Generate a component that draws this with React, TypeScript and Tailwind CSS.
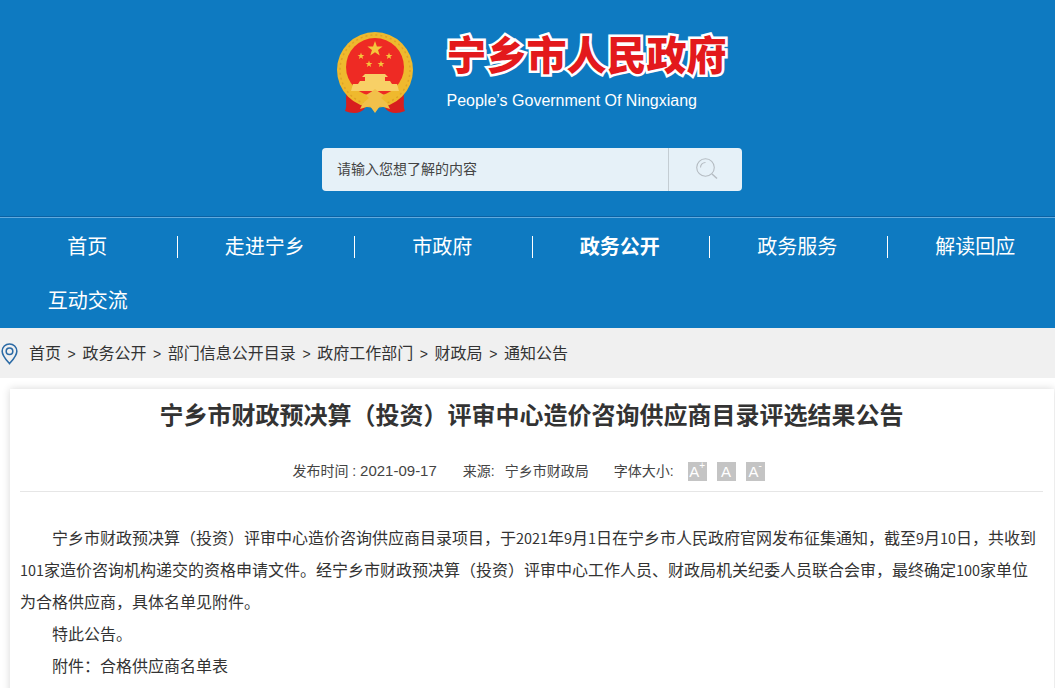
const font = "font-['Liberation_Sans','Noto_Sans_CJK_SC',sans-serif]";

function Emblem() {
  const star = "M0,-10 L2.4,-3.1 9.5,-3.1 3.8,1.2 5.9,8.1 0,4 -5.9,8.1 -3.8,1.2 -9.5,-3.1 -2.4,-3.1 Z";
  return (
    <svg width="80" height="86" viewBox="0 0 80 86" className="mt-[2px] shrink-0">
      {/* curtains */}
      <path d="M12 58 C8 66 12 74 9 80 C16 83 25 83 29 77 L33 68 Z" fill="#d81f1e" />
      <path d="M66 58 C70 66 66 74 69 80 C62 83 53 83 49 77 L45 68 Z" fill="#d81f1e" />
      {/* ring */}
      <circle cx="39" cy="39" r="38" fill="#efb92e" />
      <circle cx="39" cy="39" r="35" fill="none" stroke="#e0a326" strokeWidth="1.5" strokeDasharray="2 3" />
      <circle cx="39" cy="36" r="29" fill="#ee2a24" />
      <g fill="#f5c63c">
        <path transform="translate(39 18) scale(0.8)" d={star} />
        <path transform="translate(25 25) scale(0.36)" d={star} />
        <path transform="translate(53 25) scale(0.36)" d={star} />
        <path transform="translate(33 33) scale(0.36)" d={star} />
        <path transform="translate(45 33) scale(0.36)" d={star} />
      </g>
      {/* gate */}
      <g fill="#f8d066">
        <path d="M29 43 H49 L52 46 H26 Z" />
        <path d="M29 46 H49 V50 H29 Z" />
        <path d="M24 50 H54 L56 53 H22 Z" />
        <path d="M17 53 H61 L63 60 H15 Z" />
      </g>
      {/* ornament under the ring */}
      <path d="M30 64 L35 61 L39 58 L43 61 L48 64 L45 67 L51 72 L54 78 L44 75 L39 82 L34 75 L24 78 L27 72 L33 67 Z" fill="#f2c04a" />
    </svg>
  );
}

function PinIcon() {
  return (
    <svg width="17" height="22" viewBox="0 0 18 24" fill="none" stroke="#2b6aa5" strokeWidth="1.7">
      <path d="M9 22.5 C5 18 1 14 1 9 A8 8 0 0 1 17 9 C17 14 13 18 9 22.5 Z" />
      <circle cx="9" cy="9" r="3.6" />
    </svg>
  );
}

function SearchIcon() {
  return (
    <svg width="22" height="22" viewBox="0 0 22 22" fill="none" stroke="#b5bcc2" strokeWidth="1.1">
      <circle cx="9.5" cy="9.5" r="8.8" />
      <path d="M4.5 9.5 A5 5 0 0 1 9.5 4.5" />
      <path d="M16 16 L21 20.5" strokeWidth="1.5" />
    </svg>
  );
}

function Num({ children }: { children: React.ReactNode }) {
  return <span className="text-[14.4px] leading-none">{children}</span>;
}

const navItems = ["首页", "走进宁乡", "市政府", "政务公开", "政务服务", "解读回应", "互动交流"];
const crumbs = ["首页", "政务公开", "部门信息公开目录", "政府工作部门", "财政局", "通知公告"];
const sizeBtn = "flex h-[19px] w-[19px] items-start justify-center bg-[#c4c4c4] text-[15px] leading-[20px] text-white";

export default function App() {
  return (
    <div className="h-[688px] w-[1055px] overflow-hidden">
      <div className={`${font} w-[1064px] bg-white`}>
        <header className="h-[217px] border-b border-[#0a62a4] bg-[#0e7ac1]">
          <div className="flex justify-center pl-[8px] pt-[29px]">
            <Emblem />
            <div className="ml-[30.5px] w-[289.5px]">
              <h1 className="text-[40px] font-black leading-[48px] whitespace-nowrap text-[#e3191c] [-webkit-text-stroke:5px_#ffffff] [paint-order:stroke_fill] font-['Noto_Sans_CJK_SC',sans-serif]">
                宁乡市人民政府
              </h1>
              <p className="mt-[13px] text-[16px] leading-[22px] whitespace-nowrap text-white">People’s Government Of Ningxiang</p>
            </div>
          </div>
          <div className="mx-auto mt-[31px] flex h-[43px] w-[420px] overflow-hidden rounded-[4px] bg-[#e6f1f8]">
            <div className="flex flex-1 items-center border-r border-[#c4cdd3] pl-[15px] text-[14px] text-[#444444]">请输入您想了解的内容</div>
            <div className="flex w-[73px] items-center justify-center pb-[1px] pl-[2px]"><SearchIcon /></div>
          </div>
        </header>
        <nav className="grid h-[111px] grid-cols-[repeat(6,177.5px)] border-t border-[#62aade] bg-[#0e7ac1] text-[20px] text-white">
          {navItems.map((item, i) => (
            <div key={item} className={`flex h-[55px] items-center justify-center ${i < 6 ? "pt-[2px]" : ""}`}>
              <span className={`flex h-[22px] w-full items-center justify-center pr-[2px] ${i < 5 ? "border-r border-white" : ""} ${item === "政务公开" ? "font-bold" : ""}`}>
                {item}
              </span>
            </div>
          ))}
        </nav>
        <div className="flex h-[50px] items-center bg-[#f0f0f0] pt-[2px] text-[16px] text-[#333333]">
          <span className="ml-[1px] mr-[11px] flex"><PinIcon /></span>
          {crumbs.map((c, i) => (
            <span key={c} className="flex items-center">
              {i > 0 && <span className="mx-[6.6px] text-[14px]">&gt;</span>}
              {c}
            </span>
          ))}
        </div>
        <main className="mx-[10px] mt-[11px] h-[320px] bg-white pl-[10px] pr-[11px] shadow-[0_0_8px_rgba(0,0,0,0.16)]">
          <h2 className="pt-[9px] text-center text-[24px] font-bold leading-[36px] text-[#333333]">
            宁乡市财政预决算（投资）评审中心造价咨询供应商目录评选结果公告
          </h2>
          <div className="mt-[26px] flex h-[22px] items-center justify-center pr-[6px] text-[14px] text-[#444444]">
            <span>发布时间 : <span className="text-[15px]">2021-09-17</span></span>
            <span className="ml-[26px]">来源:<span className="ml-[10px]">宁乡市财政局</span></span>
            <span className="ml-[25px]">字体大小:</span>
            <span className={`ml-[14px] ${sizeBtn}`}>A<sup className="mt-[9px] text-[10px]">+</sup></span>
            <span className={`ml-[10px] ${sizeBtn}`}>A</span>
            <span className={`ml-[10px] ${sizeBtn}`}>A<sup className="mt-[9px] text-[10px]">-</sup></span>
          </div>
          <div className="mt-[9px] border-t border-[#e6e6e6] pt-[29px] font-['Noto_Sans_CJK_SC',sans-serif] text-[16px] leading-[32px] text-[#333333]">
            <p className="indent-[32px]">宁乡市财政预决算（投资）评审中心造价咨询供应商目录项目，于<Num>2021</Num>年<Num>9</Num>月<Num>1</Num>日在宁乡市人民政府官网发布征集通知，截至<Num>9</Num>月<Num>10</Num>日，共收到<Num>101</Num>家造价咨询机构递交的资格申请文件。经宁乡市财政预决算（投资）评审中心工作人员、财政局机关纪委人员联合会审，最终确定<Num>100</Num>家单位为合格供应商，具体名单见附件。</p>
            <p className="indent-[32px]">特此公告。</p>
            <p className="indent-[32px]">附件：合格供应商名单表</p>
          </div>
        </main>
      </div>
    </div>
  );
}
